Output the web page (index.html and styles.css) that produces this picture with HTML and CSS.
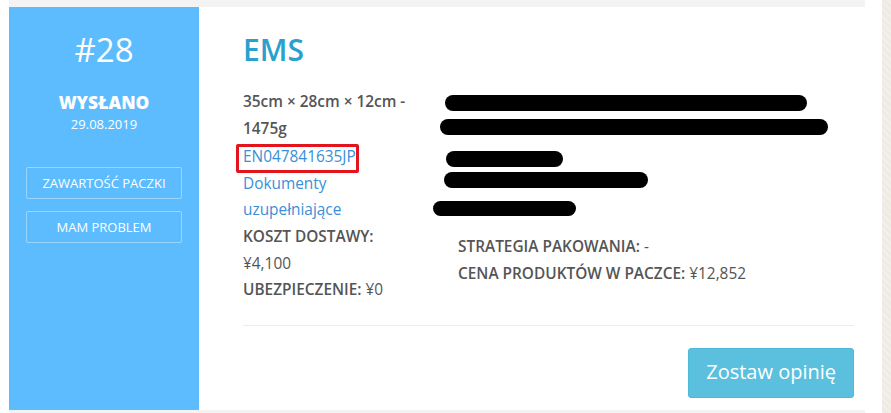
FILE: index.html
```html
<!DOCTYPE html>
<html lang="pl">
<head>
<meta charset="utf-8">
<title>Paczka #28</title>
<link rel="stylesheet" href="styles.css">
</head>
<body>
<div class="page">
  <div class="gutter"></div>
  <main class="wrap">
    <article class="parcel">
      <aside class="side">
        <div class="num">#28</div>
        <div class="status">WYSŁANO</div>
        <div class="date">29.08.2019</div>
        <a class="side-btn first" href="#">ZAWARTOŚĆ PACZKI</a>
        <a class="side-btn" href="#">MAM PROBLEM</a>
      </aside>
      <section class="content">
        <h2 class="carrier">EMS</h2>
        <div class="details">
          <div class="col-left">
            <div class="strong">35cm × 28cm × 12cm - 1475g</div>
            <div class="line-track"><a class="track" href="#">EN047841635JP</a></div>
            <div><a class="link" href="#">Dokumenty uzupełniające</a></div>
            <div><span class="strong">KOSZT DOSTAWY:</span> ¥4,100</div>
            <div><span class="strong">UBEZPIECZENIE:</span> ¥0</div>
          </div>
          <div class="col-right">
            <div class="address">
              <span class="bar b1"></span>
              <span class="bar b2"></span>
              <span class="bar b3"></span>
              <span class="bar b4"></span>
              <span class="bar b5"></span>
            </div>
            <div><span class="strong">STRATEGIA PAKOWANIA:</span> -</div>
            <div><span class="strong">CENA PRODUKTÓW W PACZCE:</span> ¥12,852</div>
          </div>
        </div>
        <div class="rule"></div>
        <div class="actions">
          <a class="opinion" href="#">Zostaw opinię</a>
        </div>
      </section>
    </article>
  </main>
  <div class="gap"></div>
  <div class="texture"></div>
</div>
</body>
</html>
```
FILE: styles.css
```css
* { box-sizing: border-box; }
html, body { margin: 0; padding: 0; background: #fff; }
body {
  font-family: "Open Sans", "Noto Sans", sans-serif;
  color: #555;
}
a { text-decoration: none; }

.page {
  display: flex;
  height: 413px;
  overflow: hidden;
}
.gutter { width: 9px; flex: none; }
.wrap {
  width: 856px;
  flex: none;
  background: #f3f3f3;
  padding-top: 7px;
}
.gap { width: 17px; flex: none; }
.texture {
  flex: 1;
  background-color: #eeebe5;
  background-image: repeating-linear-gradient(45deg, rgba(255,255,255,0.25) 0 2px, rgba(0,0,0,0) 2px 5px);
}

.parcel {
  display: flex;
  background: #fff;
  min-height: 403px;
}

.side {
  width: 190px;
  flex: none;
  background: #5cbcfe;
  color: #fff;
  padding: 23px 17px 0;
  text-align: center;
  display: flex;
  flex-direction: column;
}
.num {
  font-size: 33px;
  line-height: 40px;
  font-weight: 400;
}
.status {
  margin-top: 23px;
  font-size: 17.3px;
  line-height: 20px;
  font-weight: 800;
}
.date {
  margin-top: 2px;
  font-size: 13px;
  line-height: 18px;
}
.side-btn {
  display: block;
  height: 32px;
  border: 1px solid rgba(255,255,255,0.38);
  border-radius: 2px;
  color: #fff;
  font-size: 13px;
  line-height: 30px;
  margin-top: 12px;
}
.side-btn.first { margin-top: 34px; }

.content {
  flex: 1;
  padding: 25px 11px 11px 44px;
}
.carrier {
  margin: 0 0 21px;
  font-size: 30px;
  line-height: 36px;
  font-weight: 600;
  color: #2aa0cd;
}
.details {
  display: flex;
  font-size: 15.4px;
  line-height: 26.6px;
}
.col-left { width: 172px; flex: none; }
.col-right { margin-left: 43px; }
.strong { font-weight: 600; }
.line-track { margin-top: 2px; }
.link, .track { color: #3a8fd8; }
.track { position: relative; }
.track::after {
  content: "";
  position: absolute;
  left: -7px;
  right: -3px;
  top: -2px;
  height: 23px;
  border: 3px solid #e3141c;
  border-radius: 2px;
}

.address {
  position: relative;
  height: 145px;
}
.bar {
  position: absolute;
  background: #000;
  border-radius: 8px;
  height: 16px;
}
.b1 { left: -13px; top: 6px; width: 362px; }
.b2 { left: -18px; top: 30px; width: 388px; }
.b3 { left: -12px; top: 62px; width: 117px; }
.b4 { left: -14px; top: 83px; width: 204px; }
.b5 { left: -25px; top: 112px; width: 143px; height: 15px; }

.rule {
  margin-top: 21px;
  border-top: 1px solid #ececec;
}
.actions {
  margin-top: 22px;
  display: flex;
  justify-content: flex-end;
}
.opinion {
  display: block;
  height: 50px;
  padding: 9px 17px 11px;
  font-size: 20px;
  line-height: 28px;
  color: #fff;
  background: #5bc0de;
  border: 1px solid #4fb9d9;
  border-radius: 3px;
}
```
